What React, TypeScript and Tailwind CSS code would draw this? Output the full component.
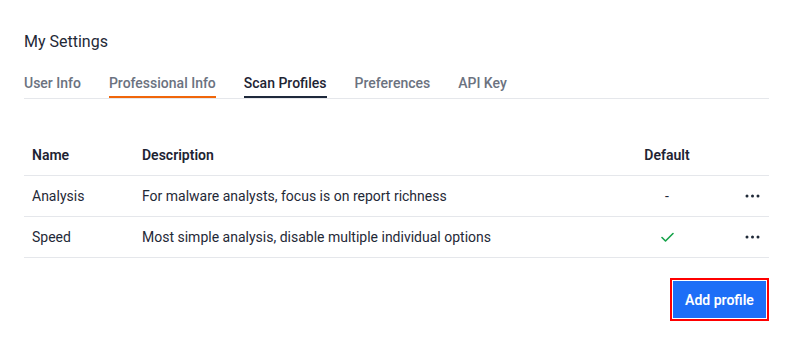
import React from "react";

const tabs = [
  { label: "User Info", state: "idle" },
  { label: "Professional Info", state: "hover" },
  { label: "Scan Profiles", state: "active" },
  { label: "Preferences", state: "idle" },
  { label: "API Key", state: "idle" },
];

const profiles = [
  {
    name: "Analysis",
    description: "For malware analysts, focus is on report richness",
    isDefault: false,
  },
  {
    name: "Speed",
    description: "Most simple analysis, disable multiple individual options",
    isDefault: true,
  },
];

function Dots() {
  return (
    <svg width="15" height="4" viewBox="0 0 15 4" className="text-[#1f2937]">
      <circle cx="2" cy="2" r="1.5" fill="currentColor" />
      <circle cx="7.5" cy="2" r="1.5" fill="currentColor" />
      <circle cx="13" cy="2" r="1.5" fill="currentColor" />
    </svg>
  );
}

function Check() {
  return (
    <svg width="13" height="10" viewBox="0 0 13 10" fill="none">
      <path
        d="M1 5.5 L4.5 9 L12 1.5"
        stroke="#16a34a"
        strokeWidth="1.6"
        strokeLinecap="round"
        strokeLinejoin="round"
      />
    </svg>
  );
}

export default function App() {
  return (
    <div
      className="w-[789px] h-[340px] bg-white pl-6 pr-5 pt-[30px]"
      style={{ fontFamily: "Roboto, 'Liberation Sans', sans-serif" }}
    >
      <h1 className="text-base leading-6 text-[#1f2937]">My Settings</h1>

      <div className="mt-[19px] flex gap-7 border-b border-[#e5e7eb]">
        {tabs.map((tab) => (
          <div
            key={tab.label}
            className={
              tab.state === "active"
                ? "text-sm leading-5 font-medium pb-[3px] border-b-2 border-[#1e293b] text-[#1e2433]"
                : tab.state === "hover"
                ? "text-sm leading-5 font-medium pb-[3px] border-b-2 border-[#f0660a] text-[#6b7280]"
                : "text-sm leading-5 font-medium pb-[3px] border-b-2 border-transparent text-[#6b7280]"
            }
          >
            {tab.label}
          </div>
        ))}
      </div>

      <div className="mt-[36px] text-sm text-[#1f2937]">
        <div className="grid grid-cols-[110px_1fr_90px_57px] h-[41px] items-center border-b border-[#e5e7eb] font-semibold text-[#1e2433]">
          <div className="px-2">Name</div>
          <div className="px-2">Description</div>
          <div className="text-center">Default</div>
          <div></div>
        </div>
        {profiles.map((p) => (
          <div
            key={p.name}
            className="grid grid-cols-[110px_1fr_90px_57px] h-[41px] items-center border-b border-[#e5e7eb]"
          >
            <div className="px-2">{p.name}</div>
            <div className="px-2">{p.description}</div>
            <div className="flex justify-center">
              {p.isDefault ? <Check /> : <span>-</span>}
            </div>
            <div className="flex justify-end pr-[9px]">
              <Dots />
            </div>
          </div>
        ))}
      </div>

      <div className="mt-[23px] flex justify-end pr-[3px]">
        <button className="w-[93px] h-[37px] bg-[#1d6ef7] text-white text-sm font-semibold ring-2 ring-[#ff0000] ring-offset-1">
          Add profile
        </button>
      </div>
    </div>
  );
}
